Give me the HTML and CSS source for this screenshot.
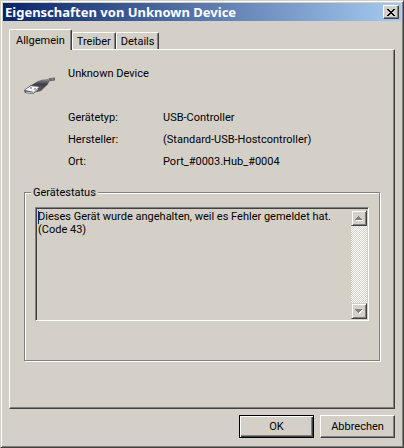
FILE: index.html
```html
<!DOCTYPE html>
<html lang="de">
<head>
    <meta charset="UTF-8">
    <meta name="viewport" content="width=device-width, initial-scale=1.0">
    <title>Eigenschaften von Unknown Device</title>
    <link rel="stylesheet" href="styles.css">
</head>
<body>
    <div class="dialog">
        <header class="title-bar">
            <h1>Eigenschaften von Unknown Device</h1>
            <button class="close-button" type="button" aria-label="Schließen">
                <svg width="8" height="7" viewBox="0 0 8 7" shape-rendering="crispEdges">
                    <path d="M0 0h2v1h1v1h2v-1h1v-1h2v1h-1v1h-1v1h-1v1h1v1h1v1h1v1h-2v-1h-1v-1h-2v1h-1v1h-2v-1h1v-1h1v-1h1v-1h-1v-1h-1v-1h-1z" fill="#000"/>
                </svg>
            </button>
        </header>

        <div class="dialog-body">
            <div class="tabs" role="tablist">
                <button class="tab active" type="button" role="tab" aria-selected="true">Allgemein</button>
                <button class="tab" type="button" role="tab" aria-selected="false">Treiber</button>
                <button class="tab" type="button" role="tab" aria-selected="false">Details</button>
            </div>

            <div class="panel" role="tabpanel">
                <div class="device">
                    <svg class="device-icon" width="32" height="18" viewBox="0 0 32 18">
                        <defs>
                            <linearGradient id="plug" x1="0" y1="0" x2="0" y2="1">
                                <stop offset="0" stop-color="#8c8c91"/>
                                <stop offset="0.4" stop-color="#3e3e44"/>
                                <stop offset="1" stop-color="#606066"/>
                            </linearGradient>
                        </defs>
                        <path d="M23 4Q26 2 31 2" fill="none" stroke="#66666b" stroke-width="3"/>
                        <path d="M24 2l2 3M28 1l1 2" stroke="#99999e" stroke-width="1"/>
                        <path d="M6 9L14 4Q21 1 25 3Q26 6 21 10L17 14L13 15Z" fill="url(#plug)"/>
                        <path d="M0 13L7 8L18 9L15 13L9 17L1 16Z" fill="#55555a"/>
                        <path d="M1 13L7 9L15 10L10 15Z" fill="#f4f4f6"/>
                        <path d="M2 15L9 16L14 12" fill="none" stroke="#c4c4ca" stroke-width="1"/>
                        <path d="M6 11l2 0M10 12l2 0" stroke="#66666c" stroke-width="1"/>
                    </svg>
                    <h2>Unknown Device</h2>
                </div>

                <dl class="properties">
                    <dt>Gerätetyp:</dt>
                    <dd>USB-Controller</dd>
                    <dt>Hersteller:</dt>
                    <dd>(Standard-USB-Hostcontroller)</dd>
                    <dt>Ort:</dt>
                    <dd>Port_#0003.Hub_#0004</dd>
                </dl>

                <fieldset class="status">
                    <legend id="status-label">Gerätestatus</legend>
                    <div class="status-box">
                        <textarea class="status-text" aria-labelledby="status-label" readonly>Dieses Gerät wurde angehalten, weil es Fehler gemeldet hat.
(Code 43)</textarea>
                        <span class="caret"></span>
                        <div class="scrollbar">
                            <button class="scroll-button" type="button" aria-label="Nach oben">
                                <svg width="8" height="5" viewBox="0 0 8 5" shape-rendering="crispEdges">
                                    <path d="M4 1h1v1h1v1h1v1h1v1H1V4h1V3h1V2h1z" fill="#fff"/>
                                    <path d="M3 0h1v1h1v1h1v1h1v1H0V3h1V2h1V1h1z" fill="#808080"/>
                                </svg>
                            </button>
                            <button class="scroll-button" type="button" aria-label="Nach unten">
                                <svg width="8" height="5" viewBox="0 0 8 5" shape-rendering="crispEdges">
                                    <path d="M1 1h7v1H7v1H6v1H5v1H4V4H3V3H2V2H1z" fill="#fff"/>
                                    <path d="M0 0h7v1H6v1H5v1H4v1H3V3H2V2H1V1H0z" fill="#808080"/>
                                </svg>
                            </button>
                        </div>
                    </div>
                </fieldset>
            </div>

            <footer class="actions">
                <button class="action default" type="button">OK</button>
                <button class="action" type="button">Abbrechen</button>
            </footer>
        </div>
    </div>
</body>
</html>
```
FILE: styles.css
```css
:root {
    --face: #d4d0c8;
    --light: #ffffff;
    --shadow: #808080;
    --dark: #404040;
}

* {
    box-sizing: border-box;
}

body {
    margin: 0;
    background: var(--face);
    color: #000;
    font-family: Roboto, Arial, sans-serif;
    font-size: 11px;
    line-height: 13px;
}

button,
textarea {
    margin: 0;
    padding: 0;
    border: 0;
    border-radius: 0;
    background: var(--face);
    color: inherit;
    font: inherit;
}

svg {
    display: block;
}

.dialog {
    display: flex;
    flex-direction: column;
    min-height: 100vh;
    padding: 1px;
    border: 1px solid;
    border-color: var(--face) var(--dark) var(--dark) var(--face);
    box-shadow: inset 1px 1px var(--light), inset -1px -1px var(--shadow);
}

/* Title bar */
.title-bar {
    display: flex;
    align-items: center;
    justify-content: space-between;
    height: 18px;
    margin: 1px;
    padding: 0 2px;
    background: linear-gradient(to right, #0a246a, #a6caf0);
}

.title-bar h1 {
    margin: 0;
    color: #fff;
    font-family: "Noto Sans", Tahoma, sans-serif;
    font-size: 13px;
    font-weight: bold;
    white-space: nowrap;
}

.close-button {
    display: flex;
    align-items: center;
    justify-content: center;
    width: 16px;
    height: 14px;
    border: 1px solid;
    border-color: var(--light) var(--dark) var(--dark) var(--light);
    box-shadow: inset -1px -1px var(--shadow);
}

.dialog-body {
    display: flex;
    flex: 1;
    flex-direction: column;
    padding: 7px 7px 8px;
}

/* Tabs */
.tabs {
    display: flex;
    align-items: flex-end;
}

.tab {
    height: 17px;
    padding: 0 4px;
    border: 1px solid;
    border-color: var(--light) var(--dark) transparent var(--light);
    border-bottom: 0;
    border-radius: 2px 2px 0 0;
    box-shadow: inset -1px 0 var(--shadow);
}

.tab.active {
    position: relative;
    z-index: 1;
    height: 21px;
    margin-bottom: -1px;
    padding: 0 6px;
}

/* Panel */
.panel {
    flex: 1;
    padding: 17px 14px 44px;
    border: 1px solid;
    border-color: var(--light) var(--dark) var(--dark) var(--light);
    box-shadow: inset -1px -1px var(--shadow);
}

.device {
    display: flex;
    gap: 12px;
}

.device-icon {
    margin-top: 10px;
}

.device h2 {
    margin: 0;
    font-size: 11px;
    font-weight: normal;
}

.properties {
    display: grid;
    grid-template-columns: 95px 1fr;
    margin: 12px 0 13px 44px;
    line-height: 22px;
}

.properties dd {
    margin: 0;
}

/* Status group */
.status {
    min-width: 0;
    margin: 0;
    padding: 8px 10px 39px;
    border: 1px solid var(--shadow);
    box-shadow: 1px 1px var(--light), inset 1px 1px var(--light);
}

.status legend {
    padding: 0 2px;
    margin-left: -4px;
    background: var(--face);
}

.status-box {
    position: relative;
    display: flex;
    height: 114px;
    border: 1px solid;
    border-color: var(--shadow) var(--light) var(--light) var(--shadow);
    box-shadow: inset 1px 1px var(--dark);
    padding: 2px 1px 1px 2px;
}

.status-text {
    flex: 1;
    min-width: 0;
    overflow: hidden;
    outline: 0;
    resize: none;
}

.caret {
    position: absolute;
    top: 3px;
    left: 2px;
    width: 1px;
    height: 13px;
    background: #0a246a;
}

.scrollbar {
    display: flex;
    flex-direction: column;
    justify-content: space-between;
    width: 16px;
    background: repeating-conic-gradient(#fff 0 25%, #d4d0c8 0 50%) 0 0 / 2px 2px;
}

.scroll-button {
    display: flex;
    align-items: center;
    justify-content: center;
    height: 16px;
    border: 1px solid;
    border-color: var(--face) var(--dark) var(--dark) var(--face);
    box-shadow: inset 1px 1px var(--light), inset -1px -1px var(--shadow);
}

/* Dialog buttons */
.actions {
    display: flex;
    justify-content: flex-end;
    gap: 6px;
    margin-top: 6px;
}

.action {
    width: 75px;
    height: 23px;
    border: 1px solid;
    border-color: var(--light) var(--dark) var(--dark) var(--light);
    box-shadow: inset -1px -1px var(--shadow);
}

.action.default {
    border-color: #000;
    box-shadow: inset 1px 1px var(--light), inset -1px -1px var(--dark), inset -2px -2px var(--shadow);
}
```
